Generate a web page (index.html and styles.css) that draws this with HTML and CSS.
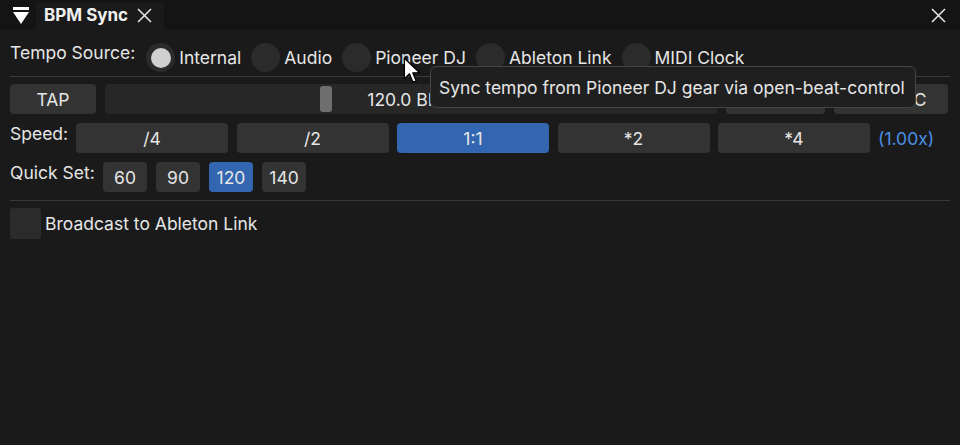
FILE: index.html
```html
<!DOCTYPE html>
<html>
<head>
<meta charset="utf-8">
<link rel="stylesheet" href="styles.css">
</head>
<body>
<div class="window">
  <div class="titlebar">
    <div class="menu-btn">
      <svg width="16" height="18" viewBox="0 0 16 18"><rect x="0" y="0" width="16" height="3" fill="#fff"/><polygon points="0,5 16,5 8,17" fill="#fff"/></svg>
    </div>
    <div class="tab">
      <span class="tab-title">BPM Sync</span>
      <svg class="tab-x" width="15" height="15" viewBox="0 0 15 15"><path d="M1 1L14 14M14 1L1 14" stroke="#e8e8e8" stroke-width="1.5"/></svg>
    </div>
    <div class="spacer"></div>
    <svg class="win-x" width="15" height="15" viewBox="0 0 15 15"><path d="M1 1L14 14M14 1L1 14" stroke="#e8e8e8" stroke-width="1.5"/></svg>
  </div>

  <div class="content">
    <div class="row row-source">
      <span class="label">Tempo Source:</span>
      <div class="radios">
        <label class="radio checked"><span class="circle"><span class="dot"></span></span><span>Internal</span></label>
        <label class="radio"><span class="circle"></span><span>Audio</span></label>
        <label class="radio"><span class="circle"></span><span>Pioneer DJ</span></label>
        <label class="radio"><span class="circle"></span><span>Ableton Link</span></label>
        <label class="radio"><span class="circle"></span><span>MIDI Clock</span></label>
      </div>
    </div>

    <div class="sep sep-1"></div>

    <div class="row row-bpm">
      <div class="btn btn-tap">TAP</div>
      <div class="slider">
        <span class="grab" style="left:215px"></span>
        <span class="slider-text">120.0 BPM</span>
      </div>
      <div class="btn btn-mid">1/2</div>
      <div class="btn btn-sync">RESYNC</div>
    </div>

    <div class="row row-speed">
      <span class="label label-speed">Speed:</span>
      <div class="speed-btns">
        <div class="btn">/4</div>
        <div class="btn">/2</div>
        <div class="btn active">1:1</div>
        <div class="btn">*2</div>
        <div class="btn">*4</div>
      </div>
      <span class="mult">(1.00x)</span>
    </div>

    <div class="row row-quick">
      <span class="label label-quick">Quick Set:</span>
      <div class="quick-btns">
        <div class="btn qbtn">60</div>
        <div class="btn qbtn">90</div>
        <div class="btn qbtn active">120</div>
        <div class="btn qbtn">140</div>
      </div>
    </div>

    <div class="sep sep-2"></div>

    <label class="check-row">
      <span class="checkbox"></span>
      <span>Broadcast to Ableton Link</span>
    </label>
  </div>

  <div class="tooltip">Sync tempo from Pioneer DJ gear via open-beat-control</div>

  <svg class="cursor" width="18" height="28" viewBox="0 0 14 22">
    <path d="M1 1 L1 17 L5 13.2 L7.8 19.8 L10.3 18.8 L7.6 12.4 L12.8 12.2 Z" fill="#fff" stroke="#000" stroke-width="1" stroke-linejoin="round"/>
  </svg>
</div>
</body>
</html>
```

FILE: styles.css
```css
* { box-sizing: border-box; }

html, body {
  margin: 0;
  padding: 0;
  width: 960px;
  height: 445px;
  background: #1a1a1a;
  overflow: hidden;
}

body {
  font-family: "Inter", "Noto Sans", sans-serif;
  font-size: 17.5px;
  color: #e6e6e6;
}

.window {
  position: relative;
  width: 960px;
  height: 445px;
}

.titlebar {
  height: 30px;
  background: #141414;
  display: flex;
  align-items: flex-end;
}

.menu-btn {
  width: 36px;
  height: 30px;
  display: flex;
  justify-content: center;
  padding-top: 7px;
  padding-left: 5px;
}

.tab {
  width: 128px;
  height: 28px;
  background: #1a1a1a;
  border-radius: 4px 4px 0 0;
  display: flex;
  align-items: center;
  padding-left: 8px;
  padding-bottom: 2px;
}

.tab-title {
  font-weight: 700;
  font-size: 17px;
  color: #f0f0f0;
}

.tab-x {
  margin-left: 9px;
}

.spacer { flex: 1; }

.win-x {
  margin-right: 14px;
  align-self: flex-start;
  margin-top: 8px;
}

.content {
  padding: 12px 10px 0 10px;
}

.row {
  display: flex;
  align-items: center;
  height: 30px;
}

.label {
  align-self: flex-start;
  line-height: 21px;
  white-space: nowrap;
}

.radios {
  display: flex;
  align-items: center;
  margin-left: 11px;
  gap: 10px;
  padding-top: 1px;
}

.radio {
  display: flex;
  align-items: center;
  gap: 4px;
}

.circle {
  width: 29px;
  height: 29px;
  border-radius: 50%;
  background: #2b2b2b;
  display: flex;
  align-items: center;
  justify-content: center;
}

.dot {
  width: 20px;
  height: 20px;
  border-radius: 50%;
  background: #d0d0d0;
}

.sep {
  height: 1px;
  background: #3a3a3a;
}

.sep-1 { margin: 4px 0 7px 0; }
.sep-2 { margin: 8px 0 7px 0; }

.btn {
  height: 30px;
  background: #333333;
  border-radius: 4px;
  display: flex;
  align-items: center;
  justify-content: center;
  white-space: nowrap;
}

.btn.active {
  background: #3366b0;
}

.row-bpm {
  gap: 9px;
}

.btn-tap { width: 86px; }

.slider {
  position: relative;
  flex: 1;
  height: 30px;
  background: #272727;
  border-radius: 4px;
  display: flex;
  align-items: center;
  justify-content: center;
}

.grab {
  position: absolute;
  top: 2px;
  width: 12px;
  height: 26px;
  border-radius: 3px;
  background: #6e6e6e;
}

.slider-text {
  position: relative;
}

.btn-mid { width: 99px; }
.btn-sync { width: 114px; margin-right: 2px; }

.row-speed, .row-quick {
  margin-top: 9px;
}

.label-speed { width: 66px; }

.speed-btns {
  display: flex;
  gap: 8.5px;
}

.speed-btns .btn { width: 152px; }

.mult {
  color: #4a8fe4;
  margin-left: 8px;
}

.label-quick { width: 93px; }

.quick-btns {
  display: flex;
  gap: 9px;
}

.qbtn { width: 44px; }

.check-row {
  display: flex;
  align-items: center;
  gap: 4px;
}

.checkbox {
  width: 31px;
  height: 31px;
  background: #2b2b2b;
  border-radius: 3px;
}

.tooltip {
  position: absolute;
  left: 430px;
  top: 66px;
  width: 486px;
  height: 42px;
  background: #1f1f1f;
  border: 1px solid #454545;
  border-radius: 6px;
  padding: 0 0 0 8px;
  display: flex;
  align-items: center;
  white-space: nowrap;
}

.cursor {
  position: absolute;
  left: 403px;
  top: 57px;
}
```
